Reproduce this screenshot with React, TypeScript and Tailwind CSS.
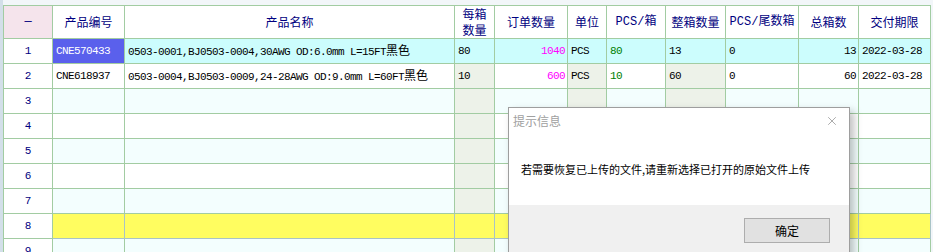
import { X } from 'lucide-react';

type Cell = { text?: string; color?: string; align?: 'left' | 'right' | 'center'; cjkTail?: string };

const widths = [49, 72, 330, 40, 73, 39, 59, 60, 73, 60, 72];
const tinted = [3, 5, 7];

const headers = ['—', '产品编号', '产品名称', '每箱数量', '订单数量', '单位', 'PCS/箱', '整箱数量', 'PCS/尾数箱', '总箱数', '交付期限'];

const dataRows: Cell[][] = [
    [
        { text: 'CNE570433' },
        { text: '0503-0001,BJ0503-0004,30AWG OD:6.0mm L=15FT', cjkTail: '黑色' },
        { text: '80' },
        { text: '1040', color: 'text-[#ff00ff]', align: 'right' },
        { text: 'PCS' },
        { text: '80', color: 'text-[#008000]' },
        { text: '13' },
        { text: '0' },
        { text: '13', align: 'right' },
        { text: '2022-03-28' },
    ],
    [
        { text: 'CNE618937' },
        { text: '0503-0004,BJ0503-0009,24-28AWG OD:9.0mm L=60FT', cjkTail: '黑色' },
        { text: '10' },
        { text: '600', color: 'text-[#ff00ff]', align: 'right' },
        { text: 'PCS' },
        { text: '10', color: 'text-[#008000]' },
        { text: '60' },
        { text: '0' },
        { text: '60', align: 'right' },
        { text: '2022-03-28' },
    ],
];

const mono = { fontFamily: '"Liberation Mono", "Noto Sans CJK SC", monospace' };
const cjk = { fontFamily: '"Noto Sans CJK SC", "Liberation Sans", sans-serif' };

function rowBg(row: number) {
    if (row === 1) return 'bg-[#ccfdfd]';
    if (row === 8) return 'bg-[#fffd60]';
    return row % 2 === 1 ? 'bg-[#f3fefe]' : 'bg-white';
}

export default function App() {
    const rows = Array.from({ length: 9 }, (_, i) => i + 1);
    return (
        <div className="relative h-[252px] w-[933px] overflow-hidden border-l-[3px] border-[#d3dfe9] bg-[#f2f6f9] pt-[5px]">
            <table className="table-fixed border-collapse" style={{ width: 928 }}>
                <colgroup>
                    {widths.map((w, i) => (
                        <col key={i} style={{ width: w }} />
                    ))}
                </colgroup>
                <thead>
                    <tr className="h-[33px]">
                        {headers.map((h, i) => (
                            <th
                                key={i}
                                className={`border border-[#a2cca2] p-0 text-center text-[12px] leading-[16px] font-normal text-[#000080] ${
                                    i === 0 ? 'bg-[#f5e4ec]' : 'bg-white'
                                }`}
                                style={h.startsWith('PCS') || i === 0 ? mono : cjk}
                            >
                                {i === 3 ? (
                                    <>
                                        每箱
                                        <br />
                                        数量
                                    </>
                                ) : (
                                    h
                                )}
                            </th>
                        ))}
                    </tr>
                </thead>
                <tbody>
                    {rows.map((r) => {
                        const data = dataRows[r - 1];
                        return (
                            <tr key={r} className="h-[25px]">
                                <td
                                    className="border border-[#a2cca2] bg-white p-0 text-center text-[11px] text-[#000080]"
                                    style={mono}
                                >
                                    {r}
                                </td>
                                {Array.from({ length: 10 }, (_, c) => {
                                    const col = c + 1;
                                    const cell = data?.[c];
                                    let bg = rowBg(r);
                                    if (r !== 1 && r !== 8 && tinted.includes(col)) bg = 'bg-[#edf2e9]';
                                    if (r === 1 && col === 1) bg = 'bg-[#5a60ec]';
                                    const color =
                                        r === 1 && col === 1 ? 'text-white' : cell?.color ?? 'text-black';
                                    const align =
                                        cell?.align === 'right' ? 'text-right pr-[2px]' : 'text-left pl-[3px]';
                                    const border = r === 8 ? 'border-[#a9c3c6]' : 'border-[#a2cca2]';
                                    return (
                                        <td
                                            key={c}
                                            className={`whitespace-nowrap border ${border} py-0 text-[11px] tracking-[-0.6px] ${bg} ${color} ${align}`}
                                            style={mono}
                                        >
                                            {cell?.text}
                                            {cell?.cjkTail && (
                                                <span className="text-[12px] tracking-normal" style={cjk}>
                                                    {cell.cjkTail}
                                                </span>
                                            )}
                                        </td>
                                    );
                                })}
                            </tr>
                        );
                    })}
                </tbody>
            </table>

            <div
                className="absolute top-[107px] left-[505px] flex h-[160px] w-[342px] flex-col border border-[#9e9e9e] bg-white shadow-[4px_4px_8px_rgba(0,0,0,0.25)]"
                style={cjk}
            >
                <div className="flex h-[26px] items-center justify-between pr-[10px] pl-[4px]">
                    <span className="text-[12px] text-[#a0a0a0]">提示信息</span>
                    <X size={14} strokeWidth={1} className="text-[#707070]" />
                </div>
                <div className="flex h-[71px] items-center pl-[12px] text-[11px] text-black">
                    若需要恢复已上传的文件,请重新选择已打开的原始文件上传
                </div>
                <div className="flex flex-1 items-start justify-end bg-[#f0f0f0] pt-[13px] pr-[19px]">
                    <button className="flex h-[25px] w-[86px] items-center justify-center border border-[#adadad] bg-[#e1e1e1] text-[12px] text-black">
                        确定
                    </button>
                </div>
            </div>
        </div>
    );
}
